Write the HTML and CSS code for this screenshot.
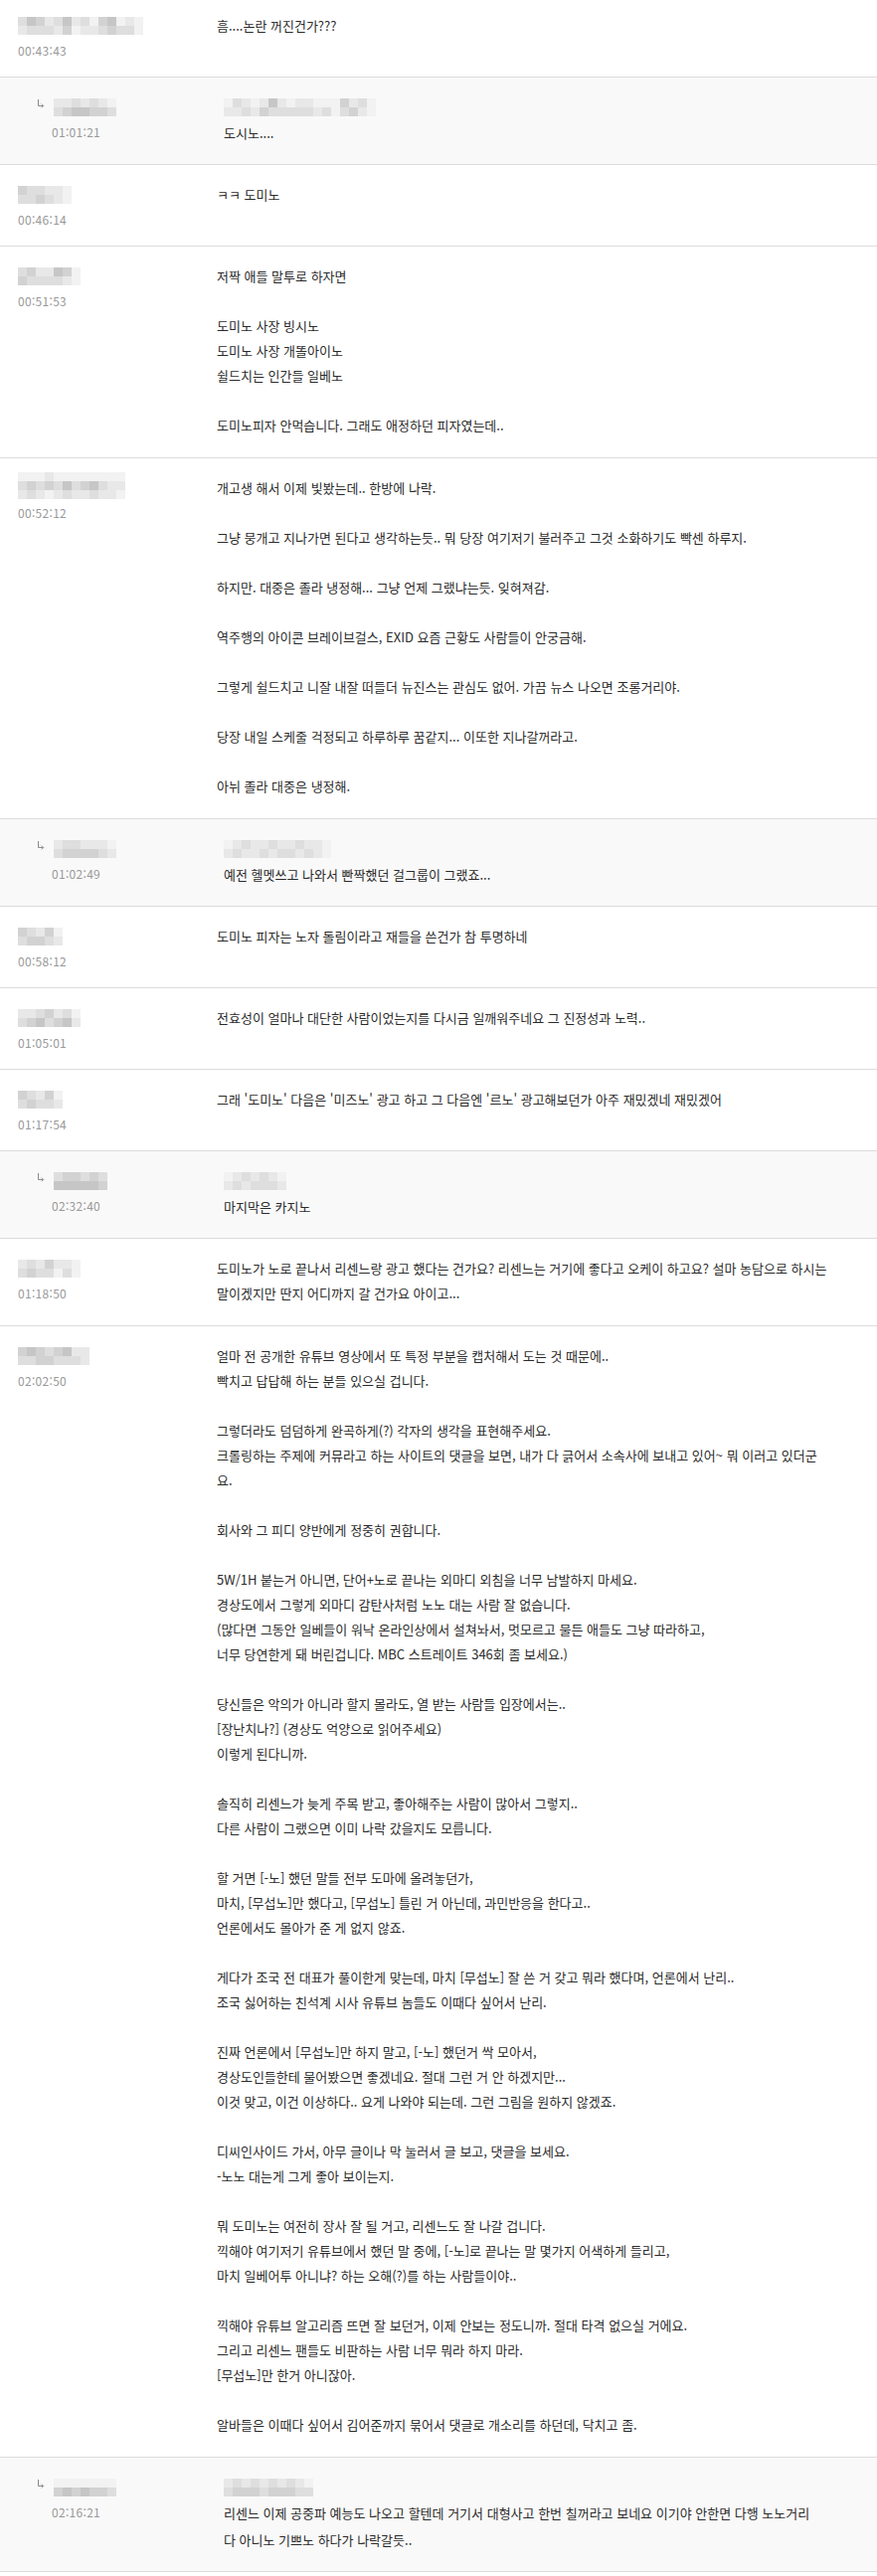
FILE: index.html
```html
<!DOCTYPE html>
<html lang="ko">
<head>
<meta charset="utf-8">
<title>댓글</title>
<link rel="stylesheet" href="styles.css">
</head>
<body>
<ul class="comments">

  <li class="comment">
    <div class="meta">
      <div class="author"><span class="mosaic"><i class="c"></i><i class="b"></i><i class="e"></i><i class="c"></i><i class="d"></i><i class="c"></i><i class="b"></i><i class="c"></i><i class="c"></i><i class="b"></i><i class="e"></i><i class="d"></i><i class="b"></i><i class="a"></i><i class="c"></i><i class="b"></i><i class="a"></i><i class="b"></i><i class="d"></i><i class="c"></i><i class="e"></i><i class="d"></i><i class="a"></i><i class="c"></i><i class="b"></i><i class="c"></i><i class="a"></i><i class="a"></i></span></div>
      <div class="time">00:43:43</div>
    </div>
    <div class="body">
      <p>흠....논란 꺼진건가???</p>
    </div>
  </li>

  <li class="comment reply">
    <div class="meta">
      <div class="author"><svg class="reply-icon" viewBox="0 0 8 9" width="8" height="9"><path d="M1.5 0v6.5h5M4.8 4.6l1.9 1.9-1.9 1.9" /></svg><span class="mosaic"><i class="b"></i><i class="c"></i><i class="b"></i><i class="d"></i><i class="c"></i><i class="e"></i><i class="b"></i><i class="e"></i><i class="c"></i><i class="d"></i><i class="b"></i><i class="d"></i><i class="a"></i><i class="c"></i></span></div>
      <div class="time">01:01:21</div>
    </div>
    <div class="body">
      <div class="mention"><span class="mosaic"><i class="a"></i><i class="b"></i><i class="c"></i><i class="b"></i><i class="b"></i><i class="c"></i><i class="a"></i><i class="b"></i><i class="b"></i><i class="d"></i><i class="e"></i><i class="c"></i><i class="b"></i><i class="c"></i><i class="a"></i><i class="c"></i><i class="b"></i><i class="c"></i><i class="b"></i><i class="c"></i><i class="a"></i><i class="b"></i><i class="a"></i><i class="c"></i><i class="a"></i><i class="a"></i><i class="d"></i><i class="c"></i><i class="b"></i><i class="d"></i><i class="c"></i><i class="b"></i><i class="a"></i><i class="a"></i></span></div>
      <p>도시노....</p>
    </div>
  </li>

  <li class="comment">
    <div class="meta">
      <div class="author"><span class="mosaic"><i class="d"></i><i class="c"></i><i class="c"></i><i class="c"></i><i class="c"></i><i class="d"></i><i class="b"></i><i class="c"></i><i class="b"></i><i class="b"></i><i class="a"></i><i class="a"></i></span></div>
      <div class="time">00:46:14</div>
    </div>
    <div class="body">
      <p>ㅋㅋ 도미노</p>
    </div>
  </li>

  <li class="comment">
    <div class="meta">
      <div class="author"><span class="mosaic"><i class="c"></i><i class="d"></i><i class="d"></i><i class="c"></i><i class="b"></i><i class="c"></i><i class="b"></i><i class="c"></i><i class="e"></i><i class="c"></i><i class="d"></i><i class="b"></i><i class="a"></i><i class="a"></i></span></div>
      <div class="time">00:51:53</div>
    </div>
    <div class="body">
      <p>저짝 애들 말투로 하자면</p>
      <p></p>
      <p>도미노 사장 빙시노</p>
      <p>도미노 사장 개똘아이노</p>
      <p>쉴드치는 인간들 일베노</p>
      <p></p>
      <p>도미노피자 안먹습니다. 그래도 애정하던 피자였는데..</p>
    </div>
  </li>

  <li class="comment">
    <div class="meta">
      <div class="author"><span class="mosaic tall"><i class="a"></i><i class="c"></i><i class="b"></i><i class="a"></i><i class="d"></i><i class="c"></i><i class="a"></i><i class="c"></i><i class="b"></i><i class="b"></i><i class="d"></i><i class="a"></i><i class="a"></i><i class="c"></i><i class="b"></i><i class="a"></i><i class="e"></i><i class="c"></i><i class="a"></i><i class="c"></i><i class="b"></i><i class="a"></i><i class="d"></i><i class="b"></i><i class="a"></i><i class="e"></i><i class="c"></i><i class="a"></i><i class="c"></i><i class="b"></i><i class="a"></i><i class="b"></i><i class="b"></i><i class="a"></i><i class="b"></i><i class="a"></i></span></div>
      <div class="time">00:52:12</div>
    </div>
    <div class="body">
      <p>개고생 해서 이제 빛봤는데.. 한방에 나락.</p>
      <p></p>
      <p>그냥 뭉개고 지나가면 된다고 생각하는듯.. 뭐 당장 여기저기 불러주고 그것 소화하기도 빡센 하루지.</p>
      <p></p>
      <p>하지만. 대중은 졸라 냉정해... 그냥 언제 그랬냐는듯. 잊혀져감.</p>
      <p></p>
      <p>역주행의 아이콘 브레이브걸스, EXID 요즘 근황도 사람들이 안궁금해.</p>
      <p></p>
      <p>그렇게 쉴드치고 니잘 내잘 떠들더 뉴진스는 관심도 없어. 가끔 뉴스 나오면 조롱거리야.</p>
      <p></p>
      <p>당장 내일 스케줄 걱정되고 하루하루 꿈같지... 이또한 지나갈꺼라고.</p>
      <p></p>
      <p>아뉘 졸라 대중은 냉정해.</p>
    </div>
  </li>

  <li class="comment reply">
    <div class="meta">
      <div class="author"><svg class="reply-icon" viewBox="0 0 8 9" width="8" height="9"><path d="M1.5 0v6.5h5M4.8 4.6l1.9 1.9-1.9 1.9" /></svg><span class="mosaic"><i class="b"></i><i class="c"></i><i class="c"></i><i class="d"></i><i class="c"></i><i class="d"></i><i class="b"></i><i class="d"></i><i class="b"></i><i class="d"></i><i class="b"></i><i class="c"></i><i class="a"></i><i class="b"></i></span></div>
      <div class="time">01:02:49</div>
    </div>
    <div class="body">
      <div class="mention"><span class="mosaic"><i class="a"></i><i class="b"></i><i class="b"></i><i class="c"></i><i class="c"></i><i class="b"></i><i class="b"></i><i class="b"></i><i class="b"></i><i class="c"></i><i class="c"></i><i class="b"></i><i class="b"></i><i class="c"></i><i class="b"></i><i class="c"></i><i class="c"></i><i class="b"></i><i class="b"></i><i class="c"></i><i class="b"></i><i class="b"></i><i class="a"></i><i class="a"></i></span></div>
      <p>예전 헬멧쓰고 나와서 빤짝했던 걸그룹이 그랬죠...</p>
    </div>
  </li>

  <li class="comment">
    <div class="meta">
      <div class="author"><span class="mosaic"><i class="d"></i><i class="c"></i><i class="c"></i><i class="d"></i><i class="b"></i><i class="d"></i><i class="d"></i><i class="c"></i><i class="a"></i><i class="b"></i></span></div>
      <div class="time">00:58:12</div>
    </div>
    <div class="body">
      <p>도미노 피자는 노자 돌림이라고 재들을 쓴건가 참 투명하네</p>
    </div>
  </li>

  <li class="comment">
    <div class="meta">
      <div class="author"><span class="mosaic"><i class="b"></i><i class="c"></i><i class="b"></i><i class="d"></i><i class="c"></i><i class="e"></i><i class="d"></i><i class="c"></i><i class="b"></i><i class="d"></i><i class="c"></i><i class="e"></i><i class="a"></i><i class="b"></i></span></div>
      <div class="time">01:05:01</div>
    </div>
    <div class="body">
      <p>전효성이 얼마나 대단한 사람이었는지를 다시금 일깨워주네요 그 진정성과 노력..</p>
    </div>
  </li>

  <li class="comment">
    <div class="meta">
      <div class="author"><span class="mosaic"><i class="d"></i><i class="c"></i><i class="c"></i><i class="d"></i><i class="b"></i><i class="c"></i><i class="d"></i><i class="c"></i><i class="a"></i><i class="b"></i></span></div>
      <div class="time">01:17:54</div>
    </div>
    <div class="body">
      <p>그래 '도미노' 다음은 '미즈노' 광고 하고 그 다음엔 '르노' 광고해보던가 아주 재밌겠네 재밌겠어</p>
    </div>
  </li>

  <li class="comment reply">
    <div class="meta">
      <div class="author"><svg class="reply-icon" viewBox="0 0 8 9" width="8" height="9"><path d="M1.5 0v6.5h5M4.8 4.6l1.9 1.9-1.9 1.9" /></svg><span class="mosaic"><i class="c"></i><i class="e"></i><i class="d"></i><i class="e"></i><i class="d"></i><i class="e"></i><i class="c"></i><i class="e"></i><i class="d"></i><i class="e"></i><i class="c"></i><i class="d"></i></span></div>
      <div class="time">02:32:40</div>
    </div>
    <div class="body">
      <div class="mention"><span class="mosaic"><i class="a"></i><i class="b"></i><i class="b"></i><i class="c"></i><i class="c"></i><i class="b"></i><i class="b"></i><i class="c"></i><i class="c"></i><i class="c"></i><i class="b"></i><i class="c"></i><i class="a"></i><i class="b"></i></span></div>
      <p>마지막은 카지노</p>
    </div>
  </li>

  <li class="comment">
    <div class="meta">
      <div class="author"><span class="mosaic"><i class="b"></i><i class="c"></i><i class="c"></i><i class="d"></i><i class="b"></i><i class="c"></i><i class="d"></i><i class="c"></i><i class="b"></i><i class="a"></i><i class="b"></i><i class="c"></i><i class="a"></i><i class="a"></i></span></div>
      <div class="time">01:18:50</div>
    </div>
    <div class="body">
      <p>도미노가 노로 끝나서 리센느랑 광고 했다는 건가요? 리센느는 거기에 좋다고 오케이 하고요? 설마 농담으로 하시는 말이겠지만 딴지 어디까지 갈 건가요 아이고...</p>
    </div>
  </li>

  <li class="comment">
    <div class="meta">
      <div class="author"><span class="mosaic"><i class="d"></i><i class="c"></i><i class="e"></i><i class="c"></i><i class="d"></i><i class="d"></i><i class="c"></i><i class="d"></i><i class="d"></i><i class="c"></i><i class="e"></i><i class="c"></i><i class="b"></i><i class="c"></i><i class="b"></i><i class="b"></i></span></div>
      <div class="time">02:02:50</div>
    </div>
    <div class="body">
      <p>얼마 전 공개한 유튜브 영상에서 또 특정 부분을 캡처해서 도는 것 때문에..</p>
      <p>빡치고 답답해 하는 분들 있으실 겁니다.</p>
      <p></p>
      <p>그렇더라도 덤덤하게 완곡하게(?) 각자의 생각을 표현해주세요.</p>
      <p>크롤링하는 주제에 커뮤라고 하는 사이트의 댓글을 보면, 내가 다 긁어서 소속사에 보내고 있어~ 뭐 이러고 있더군요.</p>
      <p></p>
      <p>회사와 그 피디 양반에게 정중히 권합니다.</p>
      <p></p>
      <p>5W/1H 붙는거 아니면, 단어+노로 끝나는 외마디 외침을 너무 남발하지 마세요.</p>
      <p>경상도에서 그렇게 외마디 감탄사처럼 노노 대는 사람 잘 없습니다.</p>
      <p>(많다면 그동안 일베들이 워낙 온라인상에서 설쳐놔서, 멋모르고 물든 애들도 그냥 따라하고,</p>
      <p>너무 당연한게 돼 버린겁니다. MBC 스트레이트 346회 좀 보세요.)</p>
      <p></p>
      <p>당신들은 악의가 아니라 할지 몰라도, 열 받는 사람들 입장에서는..</p>
      <p>[장난치나?] (경상도 억양으로 읽어주세요)</p>
      <p>이렇게 된다니까.</p>
      <p></p>
      <p>솔직히 리센느가 늦게 주목 받고, 좋아해주는 사람이 많아서 그렇지..</p>
      <p>다른 사람이 그랬으면 이미 나락 갔을지도 모릅니다.</p>
      <p></p>
      <p>할 거면 [-노] 했던 말들 전부 도마에 올려놓던가,</p>
      <p>마치, [무섭노]만 했다고, [무섭노] 틀린 거 아닌데, 과민반응을 한다고..</p>
      <p>언론에서도 몰아가 준 게 없지 않죠.</p>
      <p></p>
      <p>게다가 조국 전 대표가 풀이한게 맞는데, 마치 [무섭노] 잘 쓴 거 갖고 뭐라 했다며, 언론에서 난리..</p>
      <p>조국 싫어하는 친석계 시사 유튜브 놈들도 이때다 싶어서 난리.</p>
      <p></p>
      <p>진짜 언론에서 [무섭노]만 하지 말고, [-노] 했던거 싹 모아서,</p>
      <p>경상도인들한테 물어봤으면 좋겠네요. 절대 그런 거 안 하겠지만...</p>
      <p>이것 맞고, 이건 이상하다.. 요게 나와야 되는데. 그런 그림을 원하지 않겠죠.</p>
      <p></p>
      <p>디씨인사이드 가서, 아무 글이나 막 눌러서 글 보고, 댓글을 보세요.</p>
      <p>-노노 대는게 그게 좋아 보이는지.</p>
      <p></p>
      <p>뭐 도미노는 여전히 장사 잘 될 거고, 리센느도 잘 나갈 겁니다.</p>
      <p>끽해야 여기저기 유튜브에서 했던 말 중에, [-노]로 끝나는 말 몇가지 어색하게 들리고,</p>
      <p>마치 일베어투 아니냐? 하는 오해(?)를 하는 사람들이야..</p>
      <p></p>
      <p>끽해야 유튜브 알고리즘 뜨면 잘 보던거, 이제 안보는 정도니까. 절대 타격 없으실 거에요.</p>
      <p>그리고 리센느 팬들도 비판하는 사람 너무 뭐라 하지 마라.</p>
      <p>[무섭노]만 한거 아니잖아.</p>
      <p></p>
      <p>알바들은 이때다 싶어서 김어준까지 묶어서 댓글로 개소리를 하던데, 닥치고 좀.</p>
    </div>
  </li>

  <li class="comment reply">
    <div class="meta">
      <div class="author"><svg class="reply-icon" viewBox="0 0 8 9" width="8" height="9"><path d="M1.5 0v6.5h5M4.8 4.6l1.9 1.9-1.9 1.9" /></svg><span class="mosaic"><i class="a"></i><i class="d"></i><i class="a"></i><i class="e"></i><i class="a"></i><i class="d"></i><i class="a"></i><i class="e"></i><i class="a"></i><i class="d"></i><i class="a"></i><i class="d"></i><i class="a"></i><i class="c"></i></span></div>
      <div class="time">02:16:21</div>
    </div>
    <div class="body">
      <div class="mention"><span class="mosaic"><i class="b"></i><i class="c"></i><i class="c"></i><i class="d"></i><i class="b"></i><i class="d"></i><i class="c"></i><i class="d"></i><i class="b"></i><i class="c"></i><i class="c"></i><i class="d"></i><i class="b"></i><i class="d"></i><i class="c"></i><i class="d"></i><i class="b"></i><i class="c"></i><i class="a"></i><i class="c"></i></span></div>
      <p>리센느 이제 공중파 예능도 나오고 할텐데 거기서 대형사고 한번 칠꺼라고 보네요 이기야 안한면 다행 노노거리다 아니노 기쁘노 하다가 나락갈듯..</p>
    </div>
  </li>

</ul>
</body>
</html>
```

FILE: styles.css
```css
* {
  box-sizing: border-box;
}

body {
  margin: 0;
  background: #fff;
  color: #2b2b2b;
  font-family: "Noto Sans CJK KR", "Noto Sans", sans-serif;
  font-size: 13px;
}

/* comment list */
.comments {
  list-style: none;
  margin: -4px 0 0;
  padding: 0;
}

.comment {
  display: flex;
  padding: 17px 0 14px 18px;
  border-bottom: 1px solid #dcdcdc;
}

.comment.reply {
  background: #f9f9f9;
  padding-left: 37px;
}

/* left column: author + time */
.meta {
  flex: none;
  width: 200px;
}

.reply .meta {
  width: 188px;
}

.author {
  height: 25px;
  display: flex;
  align-items: center;
}

.reply-icon {
  flex: none;
  width: 8px;
  height: 9px;
  margin: -6px 9px 0 0;
  fill: none;
  stroke: #8a8a8a;
  stroke-width: 1;
}

.time {
  line-height: 25px;
  font-size: 12px;
  letter-spacing: 0.3px;
  color: #999;
}

.reply .time {
  padding-left: 15px;
}

/* pixelated author names */
.mosaic {
  display: grid;
  grid-template-rows: repeat(2, 9px);
  grid-auto-flow: column;
  grid-auto-columns: 9px;
}

.mosaic.tall {
  grid-template-rows: repeat(3, 9px);
  margin-top: -4px;
}

.mosaic i {
  display: block;
}

.mosaic .a { background: #f2f2f2; }
.mosaic .b { background: #e8e8e8; }
.mosaic .c { background: #dedede; }
.mosaic .d { background: #d2d2d2; }
.mosaic .e { background: #c6c6c6; }

/* right column: comment text */
.body {
  width: 618px;
  padding-bottom: 6px;
  line-height: 25px;
}

.body p {
  margin: 0;
  min-height: 25px;
}

.reply .body {
  width: 600px;
  padding-bottom: 4px;
}

.mention {
  height: 25px;
  display: flex;
  align-items: center;
}

.reply .body p {
  line-height: 27px;
}
```
